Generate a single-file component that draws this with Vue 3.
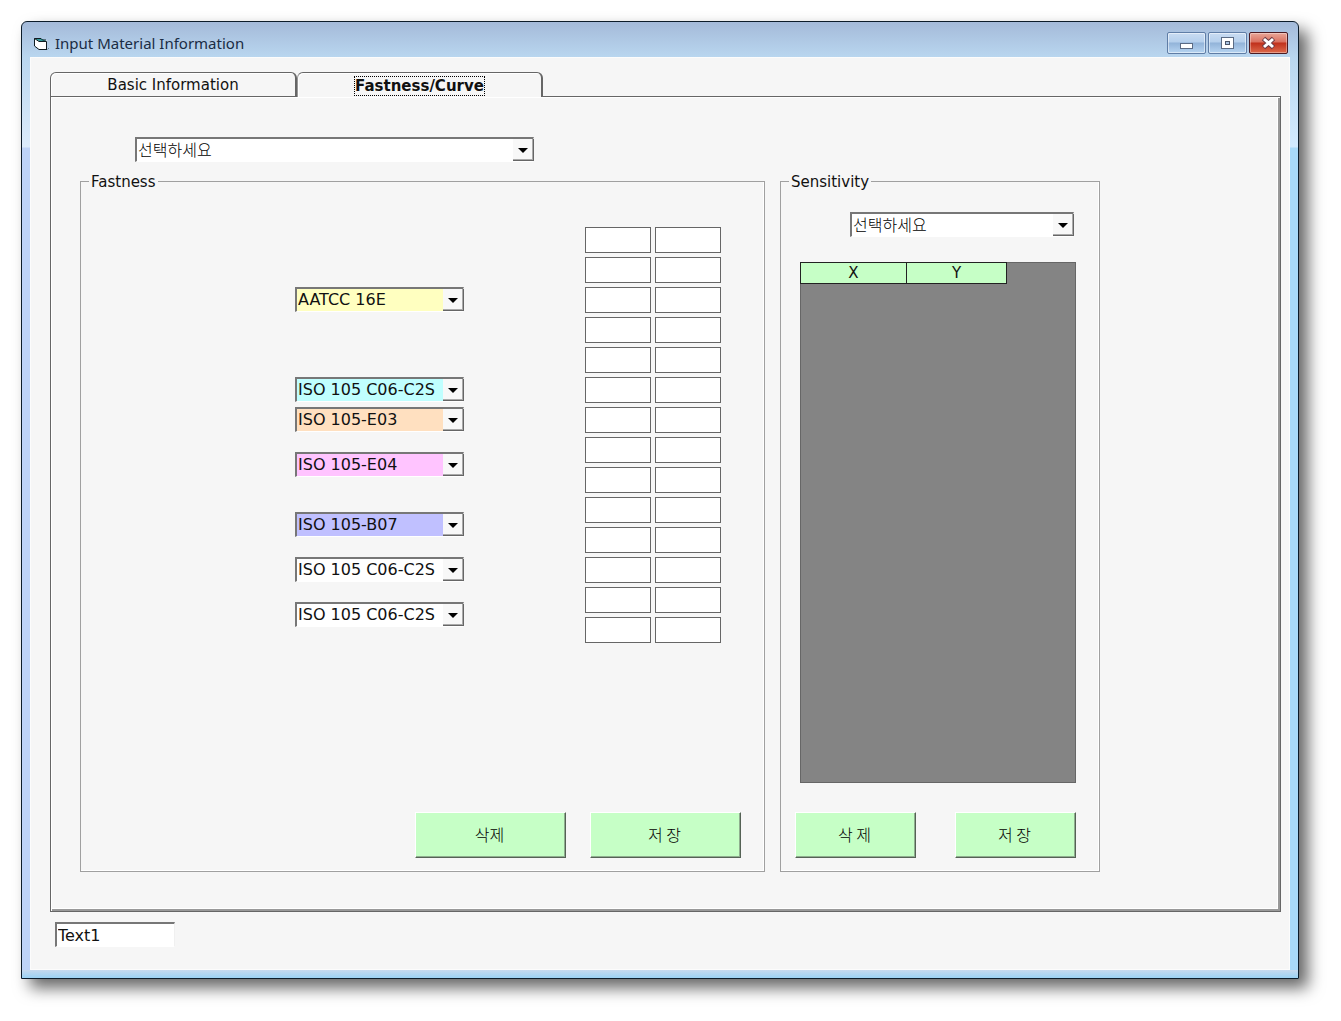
<script setup>
import { ref, reactive } from 'vue'

const placeholder = '선택하세요'
const material = ref(placeholder)
const curve = ref(placeholder)
const memo = ref('Text1')

// start = first half-row of the test grid that the combo occupies
const standards = reactive([
  { label: 'Light fastness', value: 'AATCC 16E', tone: 'yellow', start: 5 },
  { label: 'Washing fastness', value: 'ISO 105 C06-C2S', tone: 'cyan', start: 11 },
  { label: 'Chlorinated water fastness', value: 'ISO 105-E03', tone: 'orange', start: 13 },
  { label: 'Perspiration fastness', value: 'ISO 105-E04', tone: 'pink', start: 16 },
  { label: 'Light and perspiration fastness', value: 'ISO 105-B07', tone: 'blue', start: 20 },
  { label: 'Additional standard 1', value: 'ISO 105 C06-C2S', tone: 'plain', start: 23 },
  { label: 'Additional standard 2', value: 'ISO 105 C06-C2S', tone: 'plain', start: 26 },
])

const grades = reactive(Array.from({ length: 14 }, () => ['', '']))
</script>

<template>
  <main class="window">
    <header class="titlebar">
      <svg class="app-icon" viewBox="0 0 17 14" width="17" height="14" aria-hidden="true">
        <path d="M1.5 1.5 H8 L9.5 3 H13.5 V12.5 H6 L1.5 9 Z" fill="#fff" />
        <path d="M1.5 1.5 H8 L13.5 4 H6 Z" fill="#2f9a9a" />
        <path d="M8 1.5 H1.5 V9 L6 12.5 H14" fill="none" stroke="#101c22" />
        <path d="M1.5 1.5 L6 4.5 H13.5 V12.5 M8 1.5 L9.5 3 H13" fill="none" stroke="#101c22" />
        <path d="M14.5 12.5 L16 11" stroke="#6d8496" />
      </svg>
      <h1 class="title">Input Material Information</h1>
      <div class="controls">
        <button class="control" type="button" aria-label="Minimize">
          <svg viewBox="0 0 37 20" width="37" height="20">
            <rect x="12.5" y="10.5" width="12" height="5" fill="#fff" stroke="#5b6b84" />
          </svg>
        </button>
        <button class="control" type="button" aria-label="Maximize">
          <svg viewBox="0 0 37 20" width="37" height="20">
            <rect x="12.5" y="4.5" width="12" height="11" fill="#fff" stroke="#5b6b84" />
            <rect x="16.5" y="8.5" width="4" height="3" fill="#a9c3e2" stroke="#4c5669" />
          </svg>
        </button>
        <button class="control close" type="button" aria-label="Close">
          <svg viewBox="0 0 37 20" width="37" height="20">
            <path d="M13.5 5.5 L23.5 14.5 M23.5 5.5 L13.5 14.5" stroke="#6b3a44" stroke-width="5" />
            <path d="M14 6 L23 14 M23 6 L14 14" stroke="#fff" stroke-width="3" />
          </svg>
        </button>
      </div>
    </header>

    <div class="client">
      <div class="tabs" role="tablist">
        <button class="tab" type="button" role="tab" aria-selected="false">Basic Information</button>
        <button class="tab active" type="button" role="tab" aria-selected="true">
          <span class="focus">Fastness/Curve</span>
        </button>
      </div>

      <section class="panel">
        <span class="combo material">
          <select v-model="material" class="korean" aria-label="Material">
            <option>{{ placeholder }}</option>
          </select>
        </span>

        <div class="groups">
          <fieldset class="group fastness">
            <legend>Fastness</legend>
            <div class="tests">
              <span
                v-for="(item, i) in standards"
                :key="'s' + i"
                class="combo standard"
                :class="item.tone"
                :style="{ gridRowStart: item.start }"
              >
                <select v-model="item.value" :aria-label="item.label">
                  <option>{{ item.value }}</option>
                </select>
              </span>
              <div class="grades">
                <template v-for="(row, r) in grades" :key="r">
                  <input
                    v-for="(cell, c) in row"
                    :key="c"
                    v-model="row[c]"
                    class="grade"
                    type="text"
                    :aria-label="`Grade ${r + 1}-${c + 1}`"
                  />
                </template>
              </div>
            </div>
            <div class="actions">
              <button class="action korean" type="button">삭제</button>
              <button class="action korean" type="button">저 장</button>
            </div>
          </fieldset>

          <fieldset class="group sensitivity">
            <legend>Sensitivity</legend>
            <span class="combo curve">
              <select v-model="curve" class="korean" aria-label="Sensitivity curve">
                <option>{{ placeholder }}</option>
              </select>
            </span>
            <div class="sheet">
              <table>
                <thead>
                  <tr>
                    <th class="col-x" scope="col">X</th>
                    <th class="col-y" scope="col">Y</th>
                  </tr>
                </thead>
              </table>
            </div>
            <div class="actions">
              <button class="action korean" type="button">삭 제</button>
              <button class="action korean" type="button">저 장</button>
            </div>
          </fieldset>
        </div>
      </section>

      <input v-model="memo" class="memo" type="text" aria-label="Memo" />
    </div>
  </main>
</template>

<style>
body {
  background: #fff;
}
</style>

<style scoped>
*,
*::before,
*::after {
  box-sizing: border-box;
}

.window {
  margin: 21px 42px 42px 21px;
  padding: 0 8px 8px;
  border: 1px solid #0c1c2a;
  border-radius: 6px 6px 0 0;
  background:
    linear-gradient(#a4bad9, #b9d6ef 35px) top / 100% 35px no-repeat,
    linear-gradient(#c6d9ee, #9bd2f4) bottom / 100% 8px no-repeat,
    linear-gradient(#b9d6ef, #dcecfc 90px, #bdd3f8 91px) left 35px / 8px 100% no-repeat,
    linear-gradient(#b9d6ef, #d3ebff 90px, #a9daf9 91px) right 35px / 8px 100% no-repeat;
  box-shadow: 9px 9px 16px rgba(0, 0, 0, 0.6);
  font-family: "DejaVu Sans", "Noto Sans CJK KR", sans-serif;
  font-size: 15px;
  line-height: 18px;
  color: #111;
}

button,
select,
input {
  font: inherit;
  color: inherit;
  margin: 0;
  border-radius: 0;
}

.combo select,
.memo {
  font-size: 16px;
}

.combo .korean,
.action {
  font-family: "Noto Sans CJK KR", sans-serif;
  font-size: 16px;
  font-weight: 300;
  color: #000;
}

.titlebar {
  display: flex;
  align-items: center;
  height: 35px;
  padding: 0 2px 0 3px;
}

.app-icon {
  margin-top: 8px;
}

.title {
  flex: 1;
  margin: 6px 0 0 5px;
  font: 15px/20px "Noto Sans", sans-serif;
  color: #1a2c44;
}

.controls {
  display: flex;
  gap: 2px;
  margin-top: 7px;
}

.control {
  width: 39px;
  height: 22px;
  padding: 0;
  border: 1px solid #5f7da6;
  border-radius: 2px;
  background: linear-gradient(#c9dcf2, #b5cfec 45%, #92b3d9 50%, #b7d5f2);
  box-shadow: inset 0 0 0 1px rgba(255, 255, 255, 0.5);
}

.control svg {
  display: block;
}

.close {
  border-color: #4b1a22;
  background: linear-gradient(#e9a698, #d9705f 45%, #c0301b 50%, #dc6a4c);
  box-shadow: inset 0 0 0 1px rgba(255, 255, 255, 0.35);
}

.client {
  padding: 15px 9px 23px 20px;
  background: #f6f6f6;
  box-shadow: inset 0 0 0 1px #fcfcfc;
}

.tabs {
  display: flex;
}

.tab {
  width: 247px;
  height: 24px;
  padding: 0;
  border: solid #666;
  border-width: 1px 2px 0 1px;
  border-radius: 6px 6px 0 0;
  background: #f6f6f6;
  box-shadow: inset 1px 1px 0 #fff;
}

.tab.active {
  position: relative;
  width: 246px;
  height: 25px;
  margin-bottom: -1px;
  padding-top: 2px;
  border-left-color: #999;
  font-weight: bold;
}

.focus {
  display: inline-block;
  border: 1px dotted #000;
}

.panel {
  padding: 40px 31px 39px 29px;
  border: 1px solid #666;
  box-shadow: inset 1px 1px 0 #fff, inset -2px -2px 0 #999, inset -3px -3px 0 #fff;
}

.combo {
  position: relative;
  display: block;
  height: 25px;
  border: solid #777;
  border-width: 2px 1px 1px 2px;
  border-color: #777 #f0f0f0 #fff #777;
  background: #fff;
}

.combo select {
  display: block;
  width: 100%;
  height: 22px;
  padding: 0 22px 0 1px;
  border: 0;
  outline: 0;
  appearance: none;
  background: transparent;
  line-height: 22px;
}

.combo .korean {
  height: 20px;
  line-height: 20px;
}

.combo::before {
  content: "";
  position: absolute;
  top: 0;
  right: -1px;
  width: 21px;
  height: 22px;
  border: solid #666;
  border-width: 0 1px 1px 0;
  background: #f8f8f8;
  box-shadow: inset -1px -1px 0 #aaa;
  pointer-events: none;
}

.combo::after {
  content: "";
  position: absolute;
  top: 9px;
  right: 5px;
  border: 5px solid transparent;
  border-top-color: #000;
  border-bottom: 0;
  pointer-events: none;
}

.material {
  width: 399px;
  max-width: 100%;
  margin-left: 55px;
}

.groups {
  display: flex;
  gap: 15px;
  margin-top: 11px;
}

.group {
  min-width: 0;
  margin: 0;
  border: 1px solid #a0a0a0;
  box-shadow: inset -1px -1px 0 #fff;
}

.group legend {
  height: 17px;
  padding: 0 2px;
}

.fastness {
  flex: 0 1 685px;
  padding: 37px 23px 13px 8px;
}

.sensitivity {
  flex: 0 1 320px;
  padding: 22px 23px 13px 8px;
}

.tests {
  display: grid;
  grid-template-columns: 169px 136px;
  grid-template-rows: repeat(28, 15px);
  justify-content: space-between;
  margin: 0 20px 0 206px;
}

.standard {
  grid-column: 1;
  grid-row-end: span 2;
}

.yellow {
  background: #ffffc0;
}

.cyan {
  background: #c0ffff;
}

.orange {
  background: #ffe0c0;
}

.pink {
  background: #ffc4ff;
}

.blue {
  background: #c0c0ff;
}

.grades {
  grid-column: 2;
  grid-row: 1 / -1;
  display: grid;
  grid-template-columns: 1fr 1fr;
  grid-auto-rows: 26px;
  gap: 4px;
}

.grade {
  width: 100%;
  min-width: 0;
  padding: 0 3px;
  border: 1px solid #666;
  background: #fff;
}

.actions {
  display: flex;
  justify-content: flex-end;
  gap: 24px;
  margin-top: 165px;
}

.action {
  width: 151px;
  height: 46px;
  padding: 0 2px 2px 0;
  border: 1px solid;
  border-color: #fff #556255 #556255 #fff;
  background: #c6ffc6;
  box-shadow: inset -1px -1px 0 #8fae8f;
}

.curve {
  margin: 0 2px 0 61px;
}

.sheet {
  height: 521px;
  margin: 25px 0 0 11px;
  border: 1px solid #666;
  background: #848484;
}

.sheet table {
  margin: -1px 0 0 -1px;
  border-collapse: collapse;
}

.sheet th {
  height: 21px;
  padding: 0;
  border: 1px solid #222;
  background: #c6ffc6;
  font-weight: normal;
}

.col-x {
  width: 106px;
}

.col-y {
  width: 100px;
}

.sensitivity .actions {
  justify-content: space-between;
  margin: 29px 0 0 6px;
}

.sensitivity .action {
  width: 121px;
}

.memo {
  display: block;
  width: 120px;
  height: 25px;
  margin: 10px 0 0 5px;
  padding: 0 1px;
  border: solid #777;
  border-width: 2px 1px 1px 2px;
  border-color: #777 #f0f0f0 #fff #777;
  background: #fff;
}
</style>
